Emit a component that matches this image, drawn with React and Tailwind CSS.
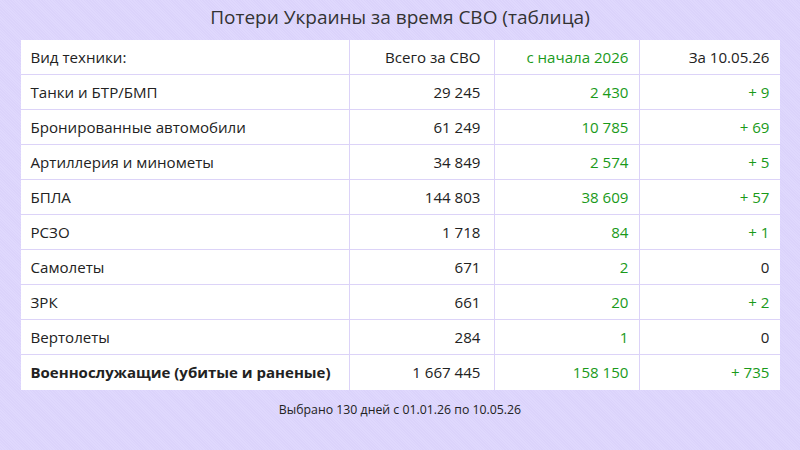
const rows = [
  { name: 'Танки и БТР/БМП', total: '29 245', year: '2 430', day: '+ 9' },
  { name: 'Бронированные автомобили', total: '61 249', year: '10 785', day: '+ 69' },
  { name: 'Артиллерия и минометы', total: '34 849', year: '2 574', day: '+ 5' },
  { name: 'БПЛА', total: '144 803', year: '38 609', day: '+ 57' },
  { name: 'РСЗО', total: '1 718', year: '84', day: '+ 1' },
  { name: 'Самолеты', total: '671', year: '2', day: '0' },
  { name: 'ЗРК', total: '661', year: '20', day: '+ 2' },
  { name: 'Вертолеты', total: '284', year: '1', day: '0' },
  { name: 'Военнослужащие (убитые и раненые)', total: '1 667 445', year: '158 150', day: '+ 735', bold: true },
]

const App = () => {
  return (
    <div className="w-[800px] h-[450px] bg-[#ddd5fc] bg-[repeating-linear-gradient(45deg,#dfd8fd_0px,#dfd8fd_1px,#dbd3fb_1px,#dbd3fb_2px)] flex flex-col items-center font-['Open_Sans',sans-serif] text-[#222]">
      {/* Title */}
      <h1 className="h-[40px] pt-[4px] text-[19px] leading-[26px] text-[#333]">
        Потери Украины за время СВО (таблица)
      </h1>

      {/* Table */}
      <div className="w-[759px] bg-white text-[15.1px]">
        <div className="grid grid-cols-[329px_145px_145px_140px] h-[35px] items-center border-b border-[#dcd3f8]">
          <div className="pl-[10px] border-r border-[#dcd3f8] h-full flex items-center">Вид техники:</div>
          <div className="pr-[13px] border-r border-[#dcd3f8] h-full flex items-center justify-end">Всего за СВО</div>
          <div className="pr-[10px] border-r border-[#dcd3f8] h-full flex items-center justify-end text-[#1a9a1a]">с начала 2026</div>
          <div className="pr-[10px] h-full flex items-center justify-end">За 10.05.26</div>
        </div>
        {rows.map((r, i) => (
          <div
            key={r.name}
            className={`grid grid-cols-[329px_145px_145px_140px] h-[35px] items-center ${i < rows.length - 1 ? 'border-b border-[#dcd3f8]' : ''}`}
          >
            <div className={`pl-[10px] border-r border-[#dcd3f8] h-full flex items-center ${r.bold ? 'font-bold text-[15px]' : ''}`}>{r.name}</div>
            <div className="pr-[13px] border-r border-[#dcd3f8] h-full flex items-center justify-end">{r.total}</div>
            <div className="pr-[10px] border-r border-[#dcd3f8] h-full flex items-center justify-end text-[#1a9a1a]">{r.year}</div>
            <div className={`pr-[10px] h-full flex items-center justify-end ${r.day === '0' ? '' : 'text-[#1a9a1a]'}`}>{r.day}</div>
          </div>
        ))}
      </div>

      {/* Footer */}
      <p className="mt-[11px] text-[12.3px] text-[#222]">Выбрано 130 дней с 01.01.26 по 10.05.26</p>
    </div>
  )
}

export default App
